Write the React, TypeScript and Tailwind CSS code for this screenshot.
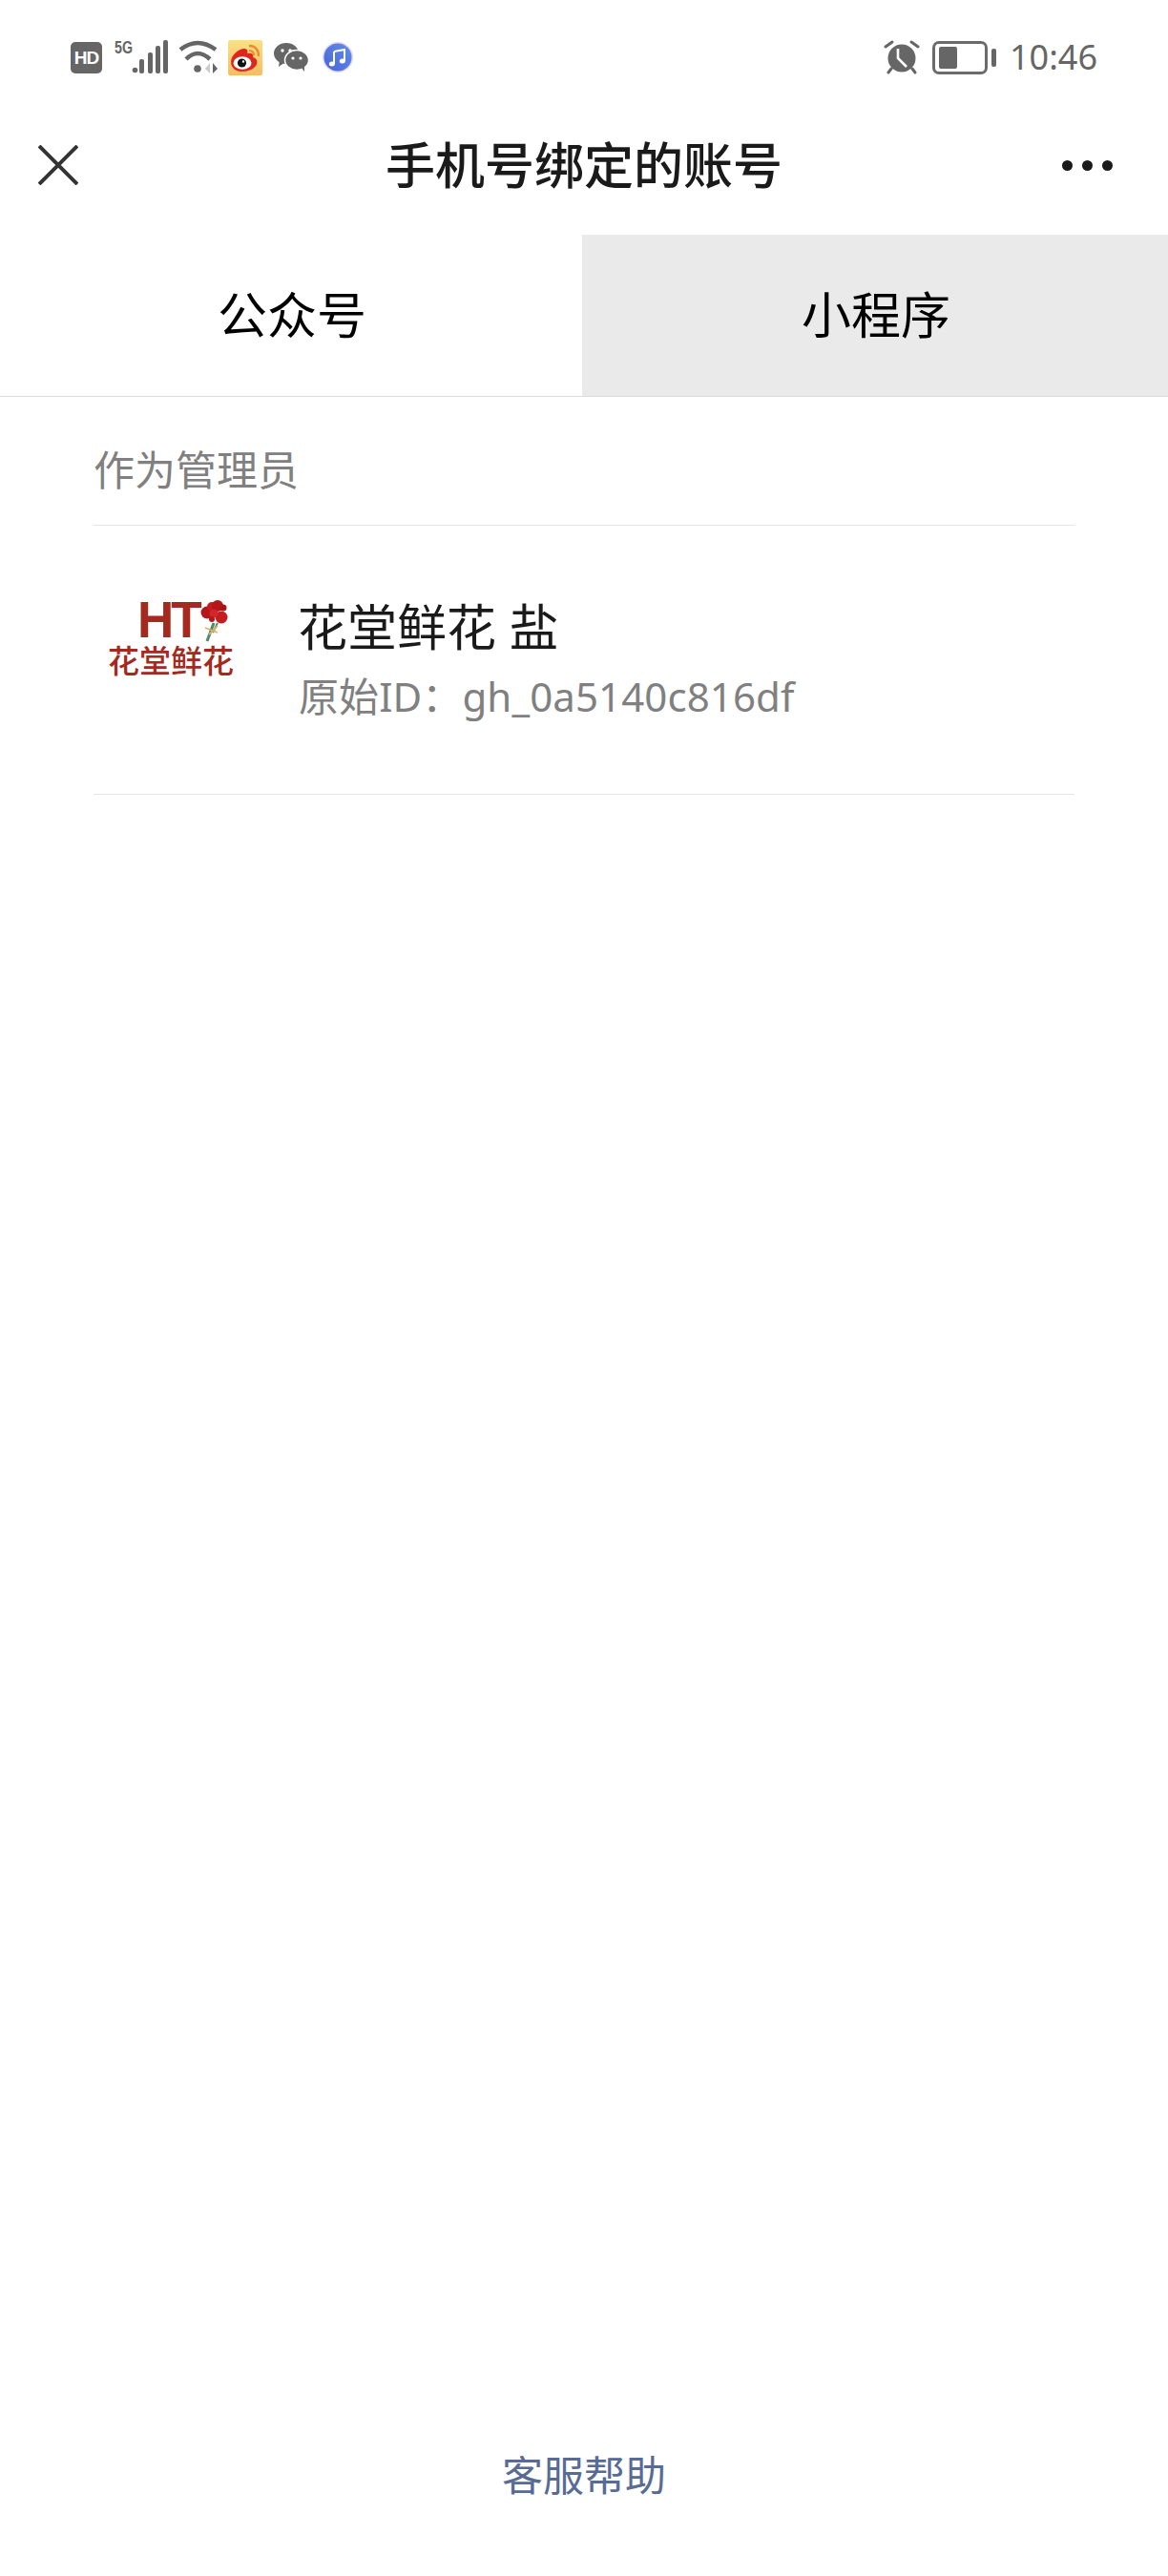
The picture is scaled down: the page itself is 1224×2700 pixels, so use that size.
import React, { useState } from 'react';

const CJK = "font-['Noto_Sans','Noto_Sans_CJK_SC',sans-serif]";

function Wifi() {
  return (
    <svg width="42" height="36" viewBox="0 0 42 36" fill="none" className="ml-[11px]">
      <path d="M2 10 Q20 -4 39 10" stroke="#666" strokeWidth="4.5" />
      <path d="M8 20 Q20 8 33 20" stroke="#666" strokeWidth="4.5" />
      <circle cx="20" cy="30" r="3.8" fill="#666" />
      <path d="M28 30 L33 24 V35 Z" fill="#ccc" />
      <path d="M41 30 L36 24 V35 Z" fill="#666" />
    </svg>
  );
}

function Signal() {
  return (
    <svg width="38" height="36" viewBox="0 0 38 36" fill="#666">
      <circle cx="3.5" cy="31.5" r="2.8" />
      <rect x="8" y="20" width="5" height="15" rx="2" />
      <rect x="17" y="13" width="5" height="22" rx="2" />
      <rect x="25" y="6" width="5" height="29" rx="2" />
      <rect x="33" y="0" width="5" height="35" rx="2" />
    </svg>
  );
}

function Weibo() {
  return (
    <svg width="36" height="37" viewBox="0 0 36 37" className="ml-[10px]">
      <defs>
        <linearGradient id="wb" x1="0" y1="0" x2="0" y2="1">
          <stop offset="0" stopColor="#fbe08a" />
          <stop offset="1" stopColor="#f6bd5e" />
        </linearGradient>
      </defs>
      <rect width="36" height="37" rx="2" fill="url(#wb)" />
      <path d="M3 23 C3 16 11 9 17 9 C20 9 21 11 20 14 C24 13 27 14 26 18 C30 19 31 22 30 25 C28 31 20 33 14 33 C8 33 3 29 3 23 Z" fill="#e0261c" />
      <ellipse cx="15" cy="24" rx="9.5" ry="6.8" fill="#fff" />
      <circle cx="14.5" cy="24" r="4.6" fill="#111" />
      <circle cx="16" cy="22.5" r="1.2" fill="#fff" />
      <path d="M22 6 C28 6 32 10 32 17" stroke="#ef8a2a" strokeWidth="2.4" fill="none" />
      <path d="M22 11 C25 11 27 13 27 16" stroke="#ef8a2a" strokeWidth="2.2" fill="none" />
    </svg>
  );
}

function WeChat() {
  return (
    <svg width="36" height="30" viewBox="0 0 36 30" className="ml-[12px]">
      <ellipse cx="13" cy="11" rx="13" ry="11" fill="#666" />
      <path d="M6 18 L5 25 L12 20 Z" fill="#666" />
      <ellipse cx="24" cy="18" rx="12.5" ry="10.5" fill="#666" stroke="#fff" strokeWidth="1.5" />
      <path d="M29 26 L32 30 L32 23 Z" fill="#666" />
      <circle cx="9" cy="8" r="1.7" fill="#fff" />
      <circle cx="17" cy="8" r="1.7" fill="#fff" />
      <circle cx="20" cy="16" r="1.6" fill="#fff" />
      <circle cx="28" cy="16" r="1.6" fill="#fff" />
    </svg>
  );
}

function MusicIcon() {
  return (
    <svg width="32" height="32" viewBox="0 0 32 32" className="ml-[15px]">
      <defs>
        <linearGradient id="mu" x1="0" y1="1" x2="1" y2="0">
          <stop offset="0" stopColor="#4a63d8" />
          <stop offset="1" stopColor="#5f8fe8" />
        </linearGradient>
      </defs>
      <circle cx="16" cy="16" r="16" fill="#e6d4f5" />
      <circle cx="16" cy="16" r="14.5" fill="url(#mu)" />
      <path d="M12 10 L23 8 V20" stroke="#fff" strokeWidth="2" fill="none" />
      <path d="M12 10 V23" stroke="#fff" strokeWidth="2" fill="none" />
      <ellipse cx="9.8" cy="23" rx="3" ry="2.5" fill="#fff" />
      <ellipse cx="20.8" cy="20" rx="3" ry="2.5" fill="#fff" />
    </svg>
  );
}

function Alarm() {
  return (
    <svg width="38" height="36" viewBox="0 0 38 36">
      <circle cx="19" cy="19" r="14.5" fill="#666" />
      <path d="M2 7 L9 2 M36 7 L29 2 M8 30 L5 34 M30 30 L33 34" stroke="#666" strokeWidth="3" strokeLinecap="round" />
      <path d="M15 9 V19 L24 28" stroke="#fff" strokeWidth="2.6" fill="none" />
    </svg>
  );
}

function Battery() {
  return (
    <div className="ml-[13px] flex items-center">
      <div className="flex h-[35px] w-[58px] items-center rounded-[7px] border-[3px] border-[#6b6b6b] pl-[4px]">
        <div className="h-[23px] w-[19px] rounded-[2px] bg-[#666]" />
      </div>
      <div className="ml-[4px] h-[19px] w-[5px] rounded-[2px] bg-[#666]" />
    </div>
  );
}

function StatusBar() {
  return (
    <div className="flex h-[120px] items-center justify-between pl-[74px] pr-[74px]">
      <div className="flex items-center">
        <div className="flex h-[33px] w-[33px] items-center justify-center rounded-[5px] bg-[#666] font-['Liberation_Sans',sans-serif] text-[19px] font-bold leading-none tracking-[-1px] text-white">
          HD
        </div>
        <div className="ml-[13px] flex items-start">
          <span className="w-[18px] origin-left scale-x-[0.75] font-['Liberation_Sans',sans-serif] text-[19px] font-bold leading-[15px] text-[#666]">5G</span>
          <Signal />
        </div>
        <Wifi />
        <Weibo />
        <WeChat />
        <MusicIcon />
      </div>
      <div className="flex items-center">
        <Alarm />
        <Battery />
        <span className="ml-[14px] font-['Noto_Sans',sans-serif] text-[36px] leading-none text-[#666]">10:46</span>
      </div>
    </div>
  );
}

function Carnation() {
  return (
    <svg width="30" height="44" viewBox="0 0 30 44" className="absolute left-[97px] top-0">
      <path d="M14 24 L7 43" stroke="#4d8a66" strokeWidth="3" />
      <path d="M18 24 L13 34" stroke="#4d8a66" strokeWidth="2" />
      <path d="M5 29 L18 34 M18 27 L9 36" stroke="#d9b36a" strokeWidth="1.8" />
      <circle cx="7" cy="13" r="6.5" fill="#b5161a" />
      <circle cx="12" cy="7" r="5" fill="#c41d20" />
      <circle cx="18" cy="6" r="6" fill="#b5161a" />
      <circle cx="24" cy="8" r="3.5" fill="#a81418" />
      <circle cx="22" cy="18" r="6.5" fill="#c41d20" />
      <circle cx="14" cy="14" r="4.5" fill="#d22628" />
      <circle cx="12" cy="20" r="3" fill="#b5161a" />
    </svg>
  );
}

function Logo() {
  return (
    <div className="relative flex h-[80px] w-[132px] shrink-0 flex-col items-center text-[#a42a20]">
      <span className="h-[45px] w-[132px] pl-[31px] font-['Liberation_Sans',sans-serif] text-[53px] font-bold leading-[42px] tracking-[-3px]">HT</span>
      <span className="whitespace-nowrap font-['Noto_Sans_CJK_SC',sans-serif] text-[33px] font-medium leading-[36px]">花堂鲜花</span>
      <Carnation />
    </div>
  );
}

export default function App() {
  const [tab, setTab] = useState<'gzh' | 'xcx'>('gzh');

  return (
    <div className={`flex h-[2700px] w-full flex-col bg-white ${CJK}`}>
      <StatusBar />

      <div className="mb-[20px] flex h-[106px] items-center px-[40px]">
        <div className="flex-1">
          <svg width="42" height="42" viewBox="0 0 42 42" stroke="#333" strokeWidth="4">
            <path d="M1 1 L41 41 M41 1 L1 41" />
          </svg>
        </div>
        <h1 className="text-[52px] font-medium leading-none text-[#1a1a1a]">手机号绑定的账号</h1>
        <div className="flex flex-1 justify-end">
          <div className="mr-[18px] flex gap-[10px]">
            <span className="h-[11px] w-[11px] rounded-full bg-[#1a1a1a]" />
            <span className="h-[11px] w-[11px] rounded-full bg-[#1a1a1a]" />
            <span className="h-[11px] w-[11px] rounded-full bg-[#1a1a1a]" />
          </div>
        </div>
      </div>

      <div className="flex h-[170px] border-b border-[#dcdcdc]">
        <button
          onClick={() => setTab('gzh')}
          className={`w-[610px] pb-[2px] pl-[2px] text-[52px] leading-none text-black ${tab === 'gzh' ? 'bg-white' : 'bg-[#eaeaea]'}`}
        >
          公众号
        </button>
        <button
          onClick={() => setTab('xcx')}
          className={`flex-1 pb-[2px] pl-[2px] text-[52px] leading-none text-black ${tab === 'xcx' ? 'bg-white' : 'bg-[#eaeaea]'}`}
        >
          小程序
        </button>
      </div>

      <div className="mx-[98px] w-[1028px]">
        <div className="flex h-[135px] items-center border-b border-[#e5e5e5] pt-[18px] text-[43px] leading-none text-[#808080]">
          作为管理员
        </div>
        <div className="flex h-[282px] items-start border-b border-[#e5e5e5] pt-[78px]">
          <div className="ml-[15px]">
            <Logo />
          </div>
          <div className="ml-[67px] flex flex-col pt-[2px]">
            <span className="text-[52px] leading-[52px] text-[#1a1a1a]">花堂鲜花 盐</span>
            <span className="ml-[1px] mt-[23px] text-[42px] leading-[48px] tracking-[0.1px] text-[#808080]">原始ID：gh_0a5140c816df</span>
          </div>
        </div>
      </div>

      <div className="mt-auto pb-[84px] text-center text-[43px] leading-[42px] text-[#576b95]">客服帮助</div>
    </div>
  );
}
